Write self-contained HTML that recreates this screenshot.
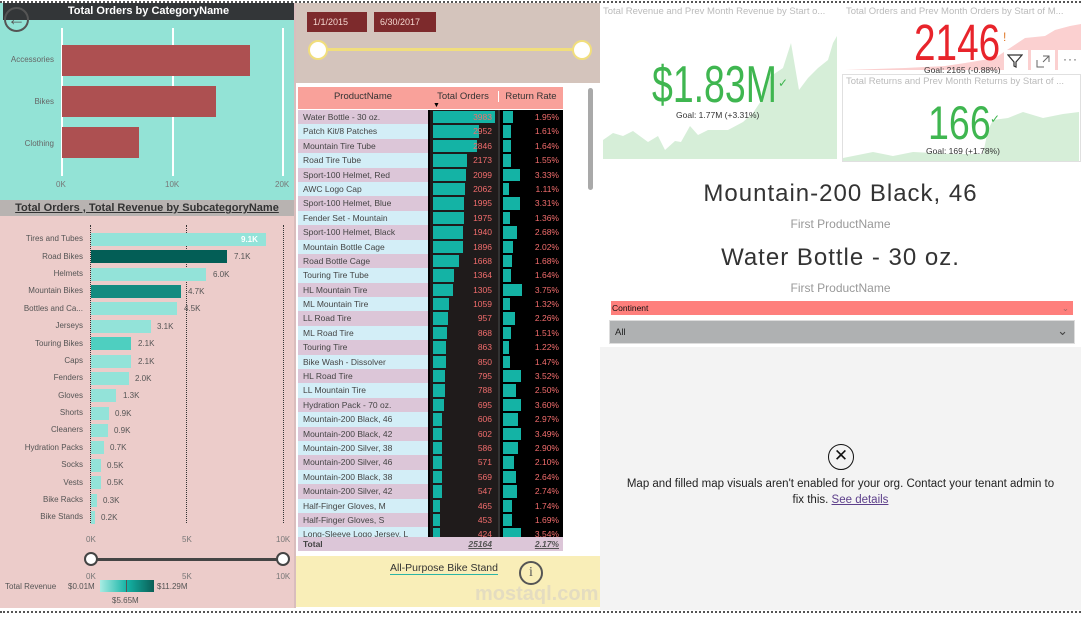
<!DOCTYPE html>
<html><head><meta charset="utf-8"><style>
*{margin:0;padding:0;box-sizing:border-box}
body{width:1081px;height:618px;position:relative;overflow:hidden;background:#fff;font-family:"Liberation Sans",sans-serif;color:#333}
.a{position:absolute}
.sb{position:absolute;left:0;width:80px;text-align:right;font-size:8px;color:#555}
.bar{position:absolute;left:91px;height:13px;background:#93e3d9}
.bv{position:absolute;font-size:8px;color:#555}
.rows{position:absolute;left:298px;top:110px;width:265px;height:427px;overflow:hidden}
.r{height:14.4px;display:flex;font-size:8.5px;line-height:14.4px}
.r .n{width:130px;padding-left:5px;color:#444;white-space:nowrap;overflow:hidden}
.p .n{background:#dcc6d8}.b .n{background:#d3eef7}
.r .o{width:70px;background:#1f1b1b;position:relative;text-align:right;padding-right:6px;color:#f26d6d;border-left:2px solid #000}
.r .o i,.r .q i{position:absolute;left:3px;top:1px;height:12.4px;background:#14b3a5}
.r .o span,.r .q span{position:relative}
.r .q{width:65px;background:#000;position:relative;text-align:right;padding-right:4px;color:#f26d6d;border-left:2px solid #333}
.big{transform-origin:0 0;white-space:nowrap}
</style></head><body>
<div class="a" style="left:0;top:1px;width:1081px;border-top:2px dotted #555"></div>
<div class="a" style="left:0;top:611px;width:1081px;border-top:2px dotted #555"></div>

<!-- LEFT TOP -->
<div class="a" style="left:0;top:3px;width:294px;height:197px;background:#93e3d6"></div>
<div class="a" style="left:3px;top:3px;width:291px;height:17px;background:#333638;color:#fff;font-weight:bold;font-size:11px;text-align:center;line-height:17px">Total Orders by CategoryName</div>
<div class="a" style="left:4px;top:7px;width:25px;height:25px;border:2px solid #555;border-radius:50%;color:#555;font-size:18px;line-height:20px;text-align:center">&#8592;</div>
<div class="a" style="left:61px;top:28px;width:2px;height:148px;background:#fff"></div>
<div class="a" style="left:172px;top:28px;width:2px;height:148px;background:#fff"></div>
<div class="a" style="left:282px;top:28px;width:2px;height:148px;background:#fff"></div>
<div class="a" style="left:62px;top:45px;width:188px;height:31px;background:#ad5051"></div>
<div class="a" style="left:62px;top:86px;width:154px;height:31px;background:#ad5051"></div>
<div class="a" style="left:62px;top:127px;width:77px;height:31px;background:#ad5051"></div>
<div class="a" style="left:0;top:55px;width:54px;text-align:right;font-size:8px;color:#666">Accessories</div>
<div class="a" style="left:0;top:97px;width:54px;text-align:right;font-size:8px;color:#666">Bikes</div>
<div class="a" style="left:0;top:139px;width:54px;text-align:right;font-size:8px;color:#666">Clothing</div>
<div class="a" style="left:56px;top:180px;font-size:8px;color:#777">0K</div>
<div class="a" style="left:165px;top:180px;font-size:8px;color:#777">10K</div>
<div class="a" style="left:275px;top:180px;font-size:8px;color:#777">20K</div>
<div class="a" style="left:0;top:200px;width:294px;height:16px;background:#b8b3b1;text-align:center;font-size:11px;font-weight:bold;color:#333;text-decoration:underline;line-height:16px">Total Orders , Total Revenue by SubcategoryName</div>
<div class="a" style="left:294px;top:3px;width:2px;height:605px;background:#d9bdbd"></div>

<!-- LEFT BOTTOM -->
<div class="a" style="left:0;top:216px;width:294px;height:392px;background:#ecccca"></div>
<div class="a" style="left:90px;top:225px;height:298px;border-left:1px dotted #333"></div>
<div class="a" style="left:186px;top:225px;height:298px;border-left:1px dotted #333"></div>
<div class="a" style="left:283px;top:225px;height:298px;border-left:1px dotted #333"></div>
<div class="sb" style="top:234px;width:83px">Tires and Tubes</div>
<div class="sb" style="top:252px;width:83px">Road Bikes</div>
<div class="sb" style="top:269px;width:83px">Helmets</div>
<div class="sb" style="top:286px;width:83px">Mountain Bikes</div>
<div class="sb" style="top:304px;width:83px">Bottles and Ca...</div>
<div class="sb" style="top:321px;width:83px">Jerseys</div>
<div class="sb" style="top:339px;width:83px">Touring Bikes</div>
<div class="sb" style="top:356px;width:83px">Caps</div>
<div class="sb" style="top:373px;width:83px">Fenders</div>
<div class="sb" style="top:391px;width:83px">Gloves</div>
<div class="sb" style="top:408px;width:83px">Shorts</div>
<div class="sb" style="top:425px;width:83px">Cleaners</div>
<div class="sb" style="top:443px;width:83px">Hydration Packs</div>
<div class="sb" style="top:460px;width:83px">Socks</div>
<div class="sb" style="top:478px;width:83px">Vests</div>
<div class="sb" style="top:495px;width:83px">Bike Racks</div>
<div class="sb" style="top:512px;width:83px">Bike Stands</div>
<div class="bar" style="top:233px;width:175px"></div><div class="bv" style="left:241px;top:235px;color:#fff;font-weight:bold">9.1K</div>
<div class="bar" style="top:250px;width:136px;background:#035e56"></div><div class="bv" style="left:234px;top:252px">7.1K</div>
<div class="bar" style="top:268px;width:115px"></div><div class="bv" style="left:213px;top:270px">6.0K</div>
<div class="bar" style="top:285px;width:90px;background:#138b80"></div><div class="bv" style="left:188px;top:287px">4.7K</div>
<div class="bar" style="top:302px;width:86px"></div><div class="bv" style="left:184px;top:304px">4.5K</div>
<div class="bar" style="top:320px;width:60px"></div><div class="bv" style="left:157px;top:322px">3.1K</div>
<div class="bar" style="top:337px;width:40px;background:#4ecfc0"></div><div class="bv" style="left:138px;top:339px">2.1K</div>
<div class="bar" style="top:355px;width:40px"></div><div class="bv" style="left:138px;top:357px">2.1K</div>
<div class="bar" style="top:372px;width:38px"></div><div class="bv" style="left:135px;top:374px">2.0K</div>
<div class="bar" style="top:389px;width:25px"></div><div class="bv" style="left:123px;top:391px">1.3K</div>
<div class="bar" style="top:407px;width:18px"></div><div class="bv" style="left:115px;top:409px">0.9K</div>
<div class="bar" style="top:424px;width:17px"></div><div class="bv" style="left:114px;top:426px">0.9K</div>
<div class="bar" style="top:441px;width:13px"></div><div class="bv" style="left:110px;top:443px">0.7K</div>
<div class="bar" style="top:459px;width:10px"></div><div class="bv" style="left:107px;top:461px">0.5K</div>
<div class="bar" style="top:476px;width:10px"></div><div class="bv" style="left:107px;top:478px">0.5K</div>
<div class="bar" style="top:494px;width:6px"></div><div class="bv" style="left:103px;top:496px">0.3K</div>
<div class="bar" style="top:511px;width:4px"></div><div class="bv" style="left:101px;top:513px">0.2K</div>
<div class="a" style="left:86px;top:535px;font-size:8px;color:#777">0K</div>
<div class="a" style="left:182px;top:535px;font-size:8px;color:#777">5K</div>
<div class="a" style="left:276px;top:535px;font-size:8px;color:#777">10K</div>
<div class="a" style="left:91px;top:558px;width:192px;height:3px;background:#444"></div>
<div class="a" style="left:84px;top:552px;width:14px;height:14px;border-radius:50%;background:#fff;border:2px solid #444"></div>
<div class="a" style="left:276px;top:552px;width:14px;height:14px;border-radius:50%;background:#fff;border:2px solid #444"></div>
<div class="a" style="left:86px;top:572px;font-size:8px;color:#777">0K</div>
<div class="a" style="left:182px;top:572px;font-size:8px;color:#777">5K</div>
<div class="a" style="left:276px;top:572px;font-size:8px;color:#777">10K</div>
<div class="a" style="left:5px;top:582px;font-size:8px;color:#555">Total Revenue</div>
<div class="a" style="left:68px;top:582px;font-size:8px;color:#555">$0.01M</div>
<div class="a" style="left:100px;top:580px;width:54px;height:12px;background:linear-gradient(90deg,#a8ece3,#14b3a5,#0a5e56)"></div>
<div class="a" style="left:126px;top:580px;width:1px;height:12px;background:#555"></div>
<div class="a" style="left:157px;top:582px;font-size:8px;color:#555">$11.29M</div>
<div class="a" style="left:112px;top:596px;font-size:8px;color:#555">$5.65M</div>

<!-- MIDDLE TOP -->
<div class="a" style="left:296px;top:3px;width:304px;height:80px;background:#d4c4bc"></div>
<div class="a" style="left:307px;top:12px;width:60px;height:20px;background:#7d2a2c;color:#f3d6cf;font-size:9px;line-height:20px;padding-left:6px">1/1/2015</div>
<div class="a" style="left:374px;top:12px;width:62px;height:20px;background:#7d2a2c;color:#f3d6cf;font-size:9px;line-height:20px;padding-left:6px">6/30/2017</div>
<div class="a" style="left:318px;top:48px;width:264px;height:3px;background:#f1de7c"></div>
<div class="a" style="left:308px;top:40px;width:20px;height:20px;border-radius:50%;background:#fff;border:2px solid #f1de7c"></div>
<div class="a" style="left:572px;top:40px;width:20px;height:20px;border-radius:50%;background:#fff;border:2px solid #f1de7c"></div>

<!-- TABLE -->
<div class="a" style="left:298px;top:87px;width:265px;height:22px;background:#f9a19a;font-size:9.5px;color:#333">
<div class="a" style="left:0;width:130px;text-align:center;top:4px">ProductName</div>
<div class="a" style="left:130px;width:70px;text-align:center;top:4px">Total Orders</div>
<div class="a" style="left:200px;width:65px;text-align:center;top:4px;border-left:1px solid #fff">Return Rate</div>
<div class="a" style="left:135px;top:15px;font-size:7px;color:#000">&#9660;</div>
</div>
<div class="rows">
<div class="r p"><div class="n">Water Bottle - 30 oz.</div><div class="o"><i style="width:62px"></i><span>3983</span></div><div class="q"><i style="width:10px"></i><span>1.95%</span></div></div>
<div class="r b"><div class="n">Patch Kit/8 Patches</div><div class="o"><i style="width:46px"></i><span>2952</span></div><div class="q"><i style="width:8px"></i><span>1.61%</span></div></div>
<div class="r p"><div class="n">Mountain Tire Tube</div><div class="o"><i style="width:44px"></i><span>2846</span></div><div class="q"><i style="width:8px"></i><span>1.64%</span></div></div>
<div class="r b"><div class="n">Road Tire Tube</div><div class="o"><i style="width:34px"></i><span>2173</span></div><div class="q"><i style="width:8px"></i><span>1.55%</span></div></div>
<div class="r p"><div class="n">Sport-100 Helmet, Red</div><div class="o"><i style="width:33px"></i><span>2099</span></div><div class="q"><i style="width:17px"></i><span>3.33%</span></div></div>
<div class="r b"><div class="n">AWC Logo Cap</div><div class="o"><i style="width:32px"></i><span>2062</span></div><div class="q"><i style="width:6px"></i><span>1.11%</span></div></div>
<div class="r p"><div class="n">Sport-100 Helmet, Blue</div><div class="o"><i style="width:31px"></i><span>1995</span></div><div class="q"><i style="width:17px"></i><span>3.31%</span></div></div>
<div class="r b"><div class="n">Fender Set - Mountain</div><div class="o"><i style="width:31px"></i><span>1975</span></div><div class="q"><i style="width:7px"></i><span>1.36%</span></div></div>
<div class="r p"><div class="n">Sport-100 Helmet, Black</div><div class="o"><i style="width:30px"></i><span>1940</span></div><div class="q"><i style="width:14px"></i><span>2.68%</span></div></div>
<div class="r b"><div class="n">Mountain Bottle Cage</div><div class="o"><i style="width:30px"></i><span>1896</span></div><div class="q"><i style="width:10px"></i><span>2.02%</span></div></div>
<div class="r p"><div class="n">Road Bottle Cage</div><div class="o"><i style="width:26px"></i><span>1668</span></div><div class="q"><i style="width:9px"></i><span>1.68%</span></div></div>
<div class="r b"><div class="n">Touring Tire Tube</div><div class="o"><i style="width:21px"></i><span>1364</span></div><div class="q"><i style="width:8px"></i><span>1.64%</span></div></div>
<div class="r p"><div class="n">HL Mountain Tire</div><div class="o"><i style="width:20px"></i><span>1305</span></div><div class="q"><i style="width:19px"></i><span>3.75%</span></div></div>
<div class="r b"><div class="n">ML Mountain Tire</div><div class="o"><i style="width:16px"></i><span>1059</span></div><div class="q"><i style="width:7px"></i><span>1.32%</span></div></div>
<div class="r p"><div class="n">LL Road Tire</div><div class="o"><i style="width:15px"></i><span>957</span></div><div class="q"><i style="width:12px"></i><span>2.26%</span></div></div>
<div class="r b"><div class="n">ML Road Tire</div><div class="o"><i style="width:14px"></i><span>868</span></div><div class="q"><i style="width:8px"></i><span>1.51%</span></div></div>
<div class="r p"><div class="n">Touring Tire</div><div class="o"><i style="width:13px"></i><span>863</span></div><div class="q"><i style="width:6px"></i><span>1.22%</span></div></div>
<div class="r b"><div class="n">Bike Wash - Dissolver</div><div class="o"><i style="width:13px"></i><span>850</span></div><div class="q"><i style="width:7px"></i><span>1.47%</span></div></div>
<div class="r p"><div class="n">HL Road Tire</div><div class="o"><i style="width:12px"></i><span>795</span></div><div class="q"><i style="width:18px"></i><span>3.52%</span></div></div>
<div class="r b"><div class="n">LL Mountain Tire</div><div class="o"><i style="width:12px"></i><span>788</span></div><div class="q"><i style="width:13px"></i><span>2.50%</span></div></div>
<div class="r p"><div class="n">Hydration Pack - 70 oz.</div><div class="o"><i style="width:11px"></i><span>695</span></div><div class="q"><i style="width:18px"></i><span>3.60%</span></div></div>
<div class="r b"><div class="n">Mountain-200 Black, 46</div><div class="o"><i style="width:9px"></i><span>606</span></div><div class="q"><i style="width:15px"></i><span>2.97%</span></div></div>
<div class="r p"><div class="n">Mountain-200 Black, 42</div><div class="o"><i style="width:9px"></i><span>602</span></div><div class="q"><i style="width:18px"></i><span>3.49%</span></div></div>
<div class="r b"><div class="n">Mountain-200 Silver, 38</div><div class="o"><i style="width:9px"></i><span>586</span></div><div class="q"><i style="width:15px"></i><span>2.90%</span></div></div>
<div class="r p"><div class="n">Mountain-200 Silver, 46</div><div class="o"><i style="width:9px"></i><span>571</span></div><div class="q"><i style="width:11px"></i><span>2.10%</span></div></div>
<div class="r b"><div class="n">Mountain-200 Black, 38</div><div class="o"><i style="width:9px"></i><span>569</span></div><div class="q"><i style="width:13px"></i><span>2.64%</span></div></div>
<div class="r p"><div class="n">Mountain-200 Silver, 42</div><div class="o"><i style="width:9px"></i><span>547</span></div><div class="q"><i style="width:14px"></i><span>2.74%</span></div></div>
<div class="r b"><div class="n">Half-Finger Gloves, M</div><div class="o"><i style="width:7px"></i><span>465</span></div><div class="q"><i style="width:9px"></i><span>1.74%</span></div></div>
<div class="r p"><div class="n">Half-Finger Gloves, S</div><div class="o"><i style="width:7px"></i><span>453</span></div><div class="q"><i style="width:9px"></i><span>1.69%</span></div></div>
<div class="r b"><div class="n">Long-Sleeve Logo Jersey, L</div><div class="o"><i style="width:7px"></i><span>424</span></div><div class="q"><i style="width:18px"></i><span>3.54%</span></div></div>
</div>
<div class="a" style="left:298px;top:537px;width:265px;height:14px;background:#dcc6d8;font-size:8.5px;line-height:14px">
<b class="a" style="left:5px;color:#444">Total</b>
<i class="a" style="left:160px;width:34px;text-align:right;color:#555;text-decoration:underline;font-weight:bold">25164</i>
<i class="a" style="left:224px;width:37px;text-align:right;color:#555;text-decoration:underline;font-weight:bold">2.17%</i>
</div>
<div class="a" style="left:588px;top:88px;width:5px;height:102px;background:#a9a9a9;border-radius:3px"></div>

<!-- MIDDLE BOTTOM -->
<div class="a" style="left:296px;top:556px;width:304px;height:51px;background:#f9eeb8"></div>
<div class="a" style="left:390px;top:562px;font-size:10.5px;color:#333;border-bottom:1px solid #2bb5a5">All-Purpose Bike Stand</div>
<div class="a" style="left:519px;top:561px;width:24px;height:24px;border:2px solid #555;border-radius:50%;text-align:center;font-size:14px;line-height:20px;color:#555;font-family:'Liberation Serif',serif">i</div>
<div class="a" style="left:475px;top:583px;font-size:20px;color:#e4dcc0;font-weight:bold">mostaql.com</div>

<!-- RIGHT CARDS -->
<svg class="a" style="left:603px;top:18px" width="234" height="141" viewBox="0 0 234 141">
<polygon fill="#d6eed8" points="0,122 10,115 20,118 30,113 45,124 55,118 62,132 72,123 78,124 87,108 95,117 105,112 125,112 140,104 150,95 160,80 165,60 180,50 188,25 196,72 205,60 215,50 225,42 230,25 234,18 234,141 0,141"/>
</svg>
<div class="a" style="left:603px;top:6px;font-size:9.5px;color:#bbb;white-space:nowrap;width:232px;overflow:hidden">Total Revenue and Prev Month Revenue by Start o...</div>
<div class="a big" style="left:652px;top:55px;font-size:52px;color:#3fb650;transform:scaleX(0.72)">$1.83M</div>
<div class="a" style="left:778px;top:76px;font-size:12px;color:#3fb650">&#10003;</div>
<div class="a" style="left:676px;top:110px;font-size:8.5px;color:#333">Goal: 1.77M (+3.31%)</div>

<svg class="a" style="left:845px;top:18px" width="236" height="52" viewBox="0 0 236 52">
<polygon fill="#fbd0d0" points="0,52 60,50 100,48 120,45 150,40 165,30 180,20 200,18 210,12 225,8 236,6 236,52"/>
</svg>
<div class="a" style="left:846px;top:6px;font-size:9.5px;color:#bbb;white-space:nowrap;width:232px;overflow:hidden">Total Orders and Prev Month Orders by Start of M...</div>
<div class="a big" style="left:914px;top:13px;font-size:51px;color:#e8242b;transform:scaleX(0.76)">2146</div>
<div class="a" style="left:1003px;top:30px;font-size:12px;color:#e07a2a">!</div>
<div class="a" style="left:924px;top:65px;font-size:8.5px;color:#333">Goal: 2165 (-0.88%)</div>
<div class="a" style="left:1004px;top:50px;width:24px;height:22px;background:#fff"></div>
<div class="a" style="left:1031px;top:50px;width:24px;height:22px;background:#fff"></div>
<div class="a" style="left:1058px;top:50px;width:23px;height:22px;background:#fff"></div>
<svg class="a" style="left:1007px;top:54px" width="16" height="14"><path d="M1 1 H15 L9 8 V13 L7 12 V8 Z" fill="none" stroke="#333" stroke-width="1.2"/></svg>
<svg class="a" style="left:1036px;top:55px" width="14" height="13"><path d="M1 5 V12 H8 M7 1 H13 V7 M13 1 L7 7" fill="none" stroke="#666" stroke-width="1"/></svg>
<div class="a" style="left:1063px;top:52px;font-size:12px;color:#555;letter-spacing:1px">&middot;&middot;&middot;</div>

<div class="a" style="left:842px;top:74px;width:239px;height:88px;background:#fff;border:1px solid #e0e0e0"></div>
<svg class="a" style="left:843px;top:90px" width="236" height="71" viewBox="0 0 236 71">
<polygon fill="#d6eed8" points="0,68 30,62 50,66 70,62 110,64 140,64 145,40 150,30 165,28 180,22 200,28 220,24 236,22 236,71 0,71"/>
</svg>
<div class="a" style="left:846px;top:76px;font-size:9.5px;color:#bbb;white-space:nowrap;width:232px;overflow:hidden">Total Returns and Prev Month Returns by Start of ...</div>
<div class="a big" style="left:928px;top:95px;font-size:47px;color:#3fb650;transform:scaleX(0.8)">166</div>
<div class="a" style="left:990px;top:112px;font-size:12px;color:#3fb650">&#10003;</div>
<div class="a" style="left:926px;top:146px;font-size:8.5px;color:#333">Goal: 169 (+1.78%)</div>

<div class="a" style="left:600px;top:180px;width:481px;text-align:center;font-size:24px;color:#333;letter-spacing:1px">Mountain-200 Black, 46</div>
<div class="a" style="left:600px;top:217px;width:481px;text-align:center;font-size:12px;color:#999">First ProductName</div>
<div class="a" style="left:600px;top:244px;width:481px;text-align:center;font-size:24px;color:#333;letter-spacing:1px">Water Bottle - 30 oz.</div>
<div class="a" style="left:600px;top:281px;width:481px;text-align:center;font-size:12px;color:#999">First ProductName</div>
<div class="a" style="left:611px;top:301px;width:462px;height:14px;background:#fe7f7c;font-size:8.5px;color:#111;line-height:14px;padding-left:1px">Continent<span style="position:absolute;right:4px;color:#a66">&#8964;</span></div>
<div class="a" style="left:609px;top:320px;width:466px;height:24px;background:#afb1b2;border:1px solid #ddd;font-size:9.5px;color:#222;line-height:24px;padding-left:5px">All<span style="position:absolute;right:6px;top:-2px;font-size:13px;color:#444">&#8964;</span></div>

<div class="a" style="left:600px;top:347px;width:481px;height:263px;background:#f3f3f3"></div>
<div class="a" style="left:828px;top:444px;width:26px;height:26px;border:1.5px solid #111;border-radius:50%;text-align:center;line-height:22px;font-size:17px;color:#111">&#10005;</div>
<div class="a" style="left:600px;top:476px;width:481px;text-align:center;font-size:11.5px;color:#222;line-height:16px">Map and filled map visuals aren't enabled for your org. Contact your tenant admin to<br>fix this. <span style="color:#5c3e8a;text-decoration:underline">See details</span></div>
</body></html>
